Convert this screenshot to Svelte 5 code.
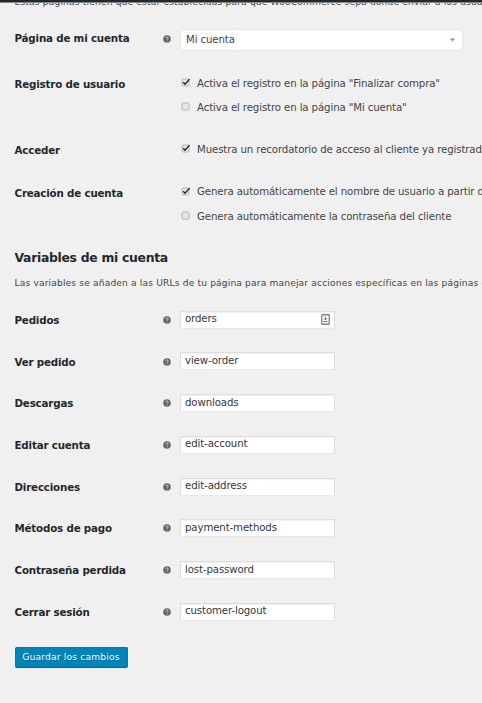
<script>
  const groups = [
    { label: 'Registro de usuario', height: 66, options: [
      { text: 'Activa el registro en la página "Finalizar compra"', on: true },
      { text: 'Activa el registro en la página "Mi cuenta"', on: false }
    ] },
    { label: 'Acceder', height: 42.5, options: [
      { text: 'Muestra un recordatorio de acceso al cliente ya registrado', on: true }
    ] },
    { label: 'Creación de cuenta', height: 65, options: [
      { text: 'Genera automáticamente el nombre de usuario a partir del correo', on: true },
      { text: 'Genera automáticamente la contraseña del cliente', on: false }
    ] }
  ];
  const fields = [
    ['Pedidos', 'orders'],
    ['Ver pedido', 'view-order'],
    ['Descargas', 'downloads'],
    ['Editar cuenta', 'edit-account'],
    ['Direcciones', 'edit-address'],
    ['Métodos de pago', 'payment-methods'],
    ['Contraseña perdida', 'lost-password'],
    ['Cerrar sesión', 'customer-logout']
  ];
</script>

{#snippet help()}
  <svg class="help" viewBox="0 0 8 8" aria-hidden="true">
    <circle cx="4" cy="4" r="3.8" fill="#666" />
    <path d="M2.8 3.1C2.8 1.5 5.3 1.6 5.2 3C5.1 3.8 4.1 3.8 4.1 4.8M4.1 5.6V6.4" fill="none" stroke="#ddd" stroke-width=".8" />
  </svg>
{/snippet}

<main>
  <div class="bar"></div>
  <div class="clip"><p>Estas páginas tienen que estar establecidas para que WooCommerce sepa dónde enviar a los usuarios</p></div>

  <div class="row page">
    <b>Página de mi cuenta</b>
    {@render help()}
    <div class="select">
      <span>Mi cuenta</span>
      <svg width="5" height="4" viewBox="0 0 5 4"><path d="M0 .5H5L2.5 3.5Z" fill="#8c8c8c" /></svg>
    </div>
  </div>

  {#each groups as g}
    <div class="group" style:height="{g.height}px">
      <b>{g.label}</b>
      <div class="options">
        {#each g.options as o}
          <div class="option">
            <svg width="10" height="9" viewBox="0 0 10 9">
              <rect x="1" y="1" width="7" height="7" rx="1.2" fill="#e6e6e6" stroke="#b4b4b4" />
              {#if o.on}<path d="M2.2 4.2L4 6.3L8.6 1.1" fill="none" stroke="#222" stroke-width="1.4" />{/if}
            </svg>
            <span>{o.text}</span>
          </div>
        {/each}
      </div>
    </div>
  {/each}

  <h2>Variables de mi cuenta</h2>
  <p class="desc">Las variables se añaden a las URLs de tu página para manejar acciones específicas en las páginas del escritorio</p>

  {#each fields as [label, value], i}
    <div class="row">
      <b>{label}</b>
      {@render help()}
      <div class="input">
        <span>{value}</span>
        {#if i === 0}
          <svg width="9" height="11" viewBox="0 0 9 11">
            <rect x=".75" y=".75" width="7.5" height="9.5" rx=".6" fill="#f4f4f4" stroke="#858585" stroke-width="1.3" />
            <path d="M4.5 2.5V6M3 5H6M2.5 7.5H6.5" fill="none" stroke="#858585" />
          </svg>
        {/if}
      </div>
    </div>
  {/each}

  <button>Guardar los cambios</button>
</main>

<style>
  :global(body) { margin: 0; background: #f0f0f0; overflow: hidden; }
  main {
    width: 482px; height: 703px; overflow: hidden; background: #f0f0f0;
    font: 10.2px/14px "DejaVu Sans", sans-serif; letter-spacing: -.12px; color: #444; white-space: nowrap;
  }
  .bar { height: 3px; background: #23282d; border-bottom: 1px solid #84878a; box-sizing: border-box; }
  .clip { height: 4px; overflow: hidden; padding-left: 14.5px; }
  .clip p { margin: -8px 0 0; font-size: 9.1px; letter-spacing: .17px; line-height: 14px; }
  b { color: #23282d; font-size: 10.3px; letter-spacing: -.18px; }
  .row { display: grid; grid-template-columns: 148.5px 17px 1fr; height: 41.7px; padding-left: 14.5px; align-items: start; }
  .row b { padding-top: 3px; }
  .help { width: 8px; height: 8px; margin-top: 6px; display: block; }
  .page { height: 57px; padding-top: 21.5px; box-sizing: border-box; }
  .page b { padding-top: 2.4px; }
  .page .help { margin-top: 6.5px; }
  .select {
    width: 283px; height: 22.5px; box-sizing: border-box; background: #fff; border: 1px solid #e6e6e6; border-radius: 3px;
    display: flex; align-items: center; justify-content: space-between; padding: 0 7px 0 5px;
  }
  .select span { padding-top: .6px; }
  .select svg { margin-top: 1px; }
  .group { display: grid; grid-template-columns: 166.5px 1fr; padding-left: 14.5px; }
  .group b { padding-top: 13px; }
  .options { padding-top: 12px; }
  .option { display: flex; height: 24.3px; }
  .option span { padding-top: .8px; }
  .option svg { margin: 2px 6px 0 0; flex: none; }
  h2 { margin: 11px 0 0 14.5px; font-size: 12.4px; letter-spacing: -.3px; line-height: 18px; color: #23282d; }
  .desc { margin: 9px 0 20.5px 14.5px; font-size: 9.1px; letter-spacing: .16px; line-height: 14px; }
  .input {
    width: 155px; height: 18px; margin-top: .8px; box-sizing: border-box; background: #fff; border: 1px solid #ddd; border-bottom-color: #e8e8e8;
    box-shadow: inset 0 1px 1px #f2f2f2; color: #32373c;
    display: flex; align-items: center; justify-content: space-between; padding: 0 4px;
  }
  .input span { padding-bottom: .8px; }
  button {
    display: block; margin: 3px 0 0 14.5px; width: 113px; height: 21px; padding: 0 0 1px; box-sizing: border-box;
    background: #0085ba; border: 1px solid #0079ad; border-bottom-color: #006799; border-radius: 2px;
    color: #fff; font: 9.1px/14px "DejaVu Sans", sans-serif; letter-spacing: .2px; text-shadow: 0 1px 1px #006799;
  }
</style>
